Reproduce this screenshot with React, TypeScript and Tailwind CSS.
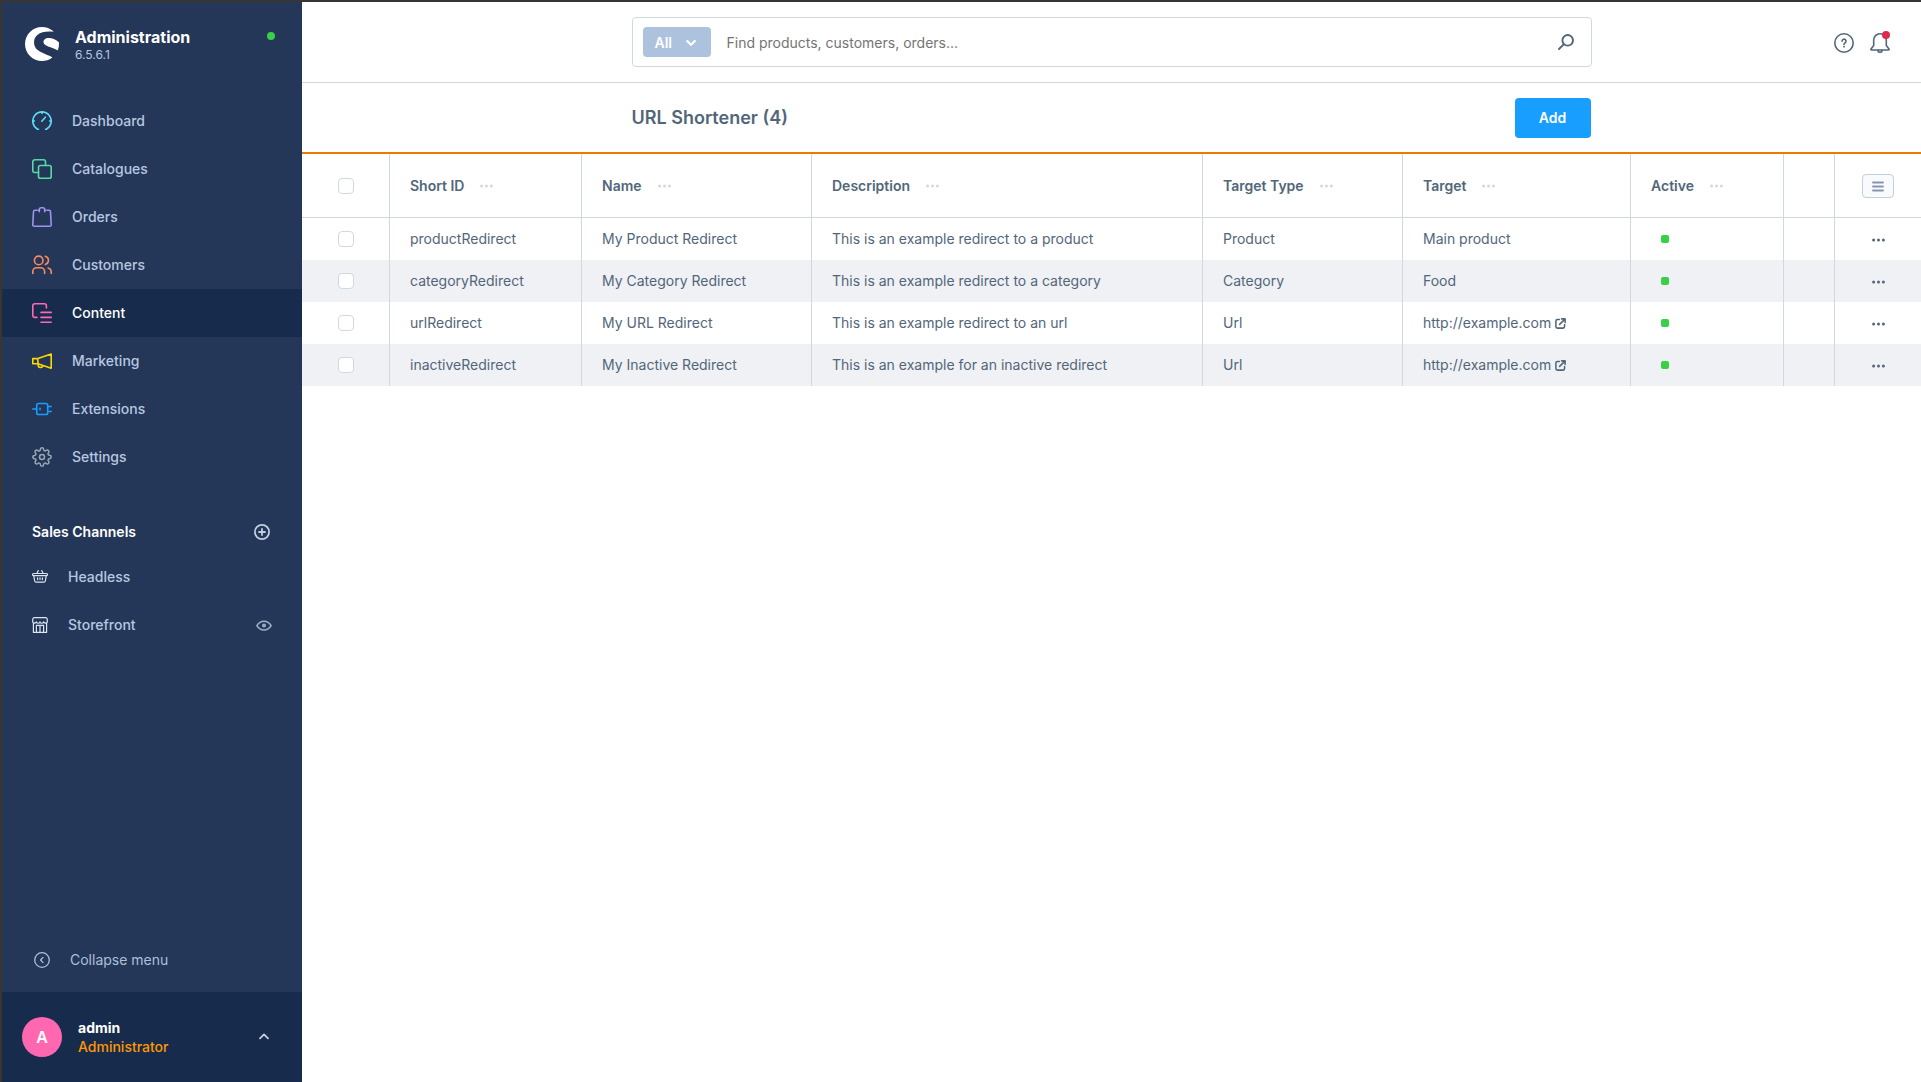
import { useState } from 'react'
import type { ReactNode } from 'react'
import { SiShopware } from 'react-icons/si'
import clsx from 'clsx'

interface IconProps {
  size?: number
  box?: string
  stroke?: number
  className?: string
  children: ReactNode
}

function Icon({ size = 20, box = '0 0 20 20', stroke = 1.6, className, children }: IconProps) {
  return (
    <svg
      width={size}
      height={size}
      viewBox={box}
      fill="none"
      stroke="currentColor"
      strokeWidth={stroke}
      strokeLinecap="round"
      strokeLinejoin="round"
      className={clsx('shrink-0', className)}
      aria-hidden="true"
    >
      {children}
    </svg>
  )
}

function Dots({ className }: { className?: string }) {
  return (
    <svg width="13" height="4" viewBox="0 0 13 4" fill="currentColor" className={className} aria-hidden="true">
      <circle cx="1.6" cy="2" r="1.5" />
      <circle cx="6.5" cy="2" r="1.5" />
      <circle cx="11.4" cy="2" r="1.5" />
    </svg>
  )
}

const NAV = [
  {
    label: 'Dashboard',
    icon: (
      <Icon className="text-[#5fdcf5]">
        <path d="M6.5 18.2H5.6A9.2 9.2 0 1 1 14.4 18.2H13.5" />
        <path d="M10 .9v1.5M.9 10h1.5M17.6 10h1.5M9.800 10.2l3.600-4" />
      </Icon>
    ),
  },
  {
    label: 'Catalogues',
    icon: (
      <Icon className="text-[#57d9a3]">
        <path d="M6.500 13.500H2.800a2 2 0 0 1-2-2V2.800a2 2 0 0 1 2-2h8.700a2 2 0 0 1 2 2v3.600" />
        <rect x="6.500" y="6.500" width="12.700" height="12.700" rx="1.800" />
      </Icon>
    ),
  },
  {
    label: 'Orders',
    icon: (
      <Icon className="text-[#a092f0]">
        <path d="M4.800 3.200H2.900a1.400 1.400 0 0 0-1.400 1.300L.8 17.700a1.400 1.400 0 0 0 1.400 1.500h15.600a1.400 1.400 0 0 0 1.400-1.500l-.7-13.200a1.400 1.400 0 0 0-1.400-1.300h-1.900" />
        <path d="M7.300 4.800V2.700a1.900 1.900 0 0 1 1.900-1.900h1.600a1.900 1.900 0 0 1 1.900 1.900v2.100M6 3.200h1.300M12.700 3.200H14" />
      </Icon>
    ),
  },
  {
    label: 'Customers',
    icon: (
      <Icon className="text-[#f88962]">
        <circle cx="6.700" cy="5.400" r="4.300" />
        <path d="M.8 18.500v-2a3.800 3.800 0 0 1 3.800-3.800h4.200a3.800 3.800 0 0 1 3.800 3.800v2" />
        <path d="M13.300 1.200a4.300 4.300 0 0 1 0 8.300M16.200 12.900a4 4 0 0 1 3 3.800v1.800" />
      </Icon>
    ),
  },
  {
    label: 'Content',
    icon: (
      <Icon className="text-[#ff68b4]">
        <path d="M4.900 14.400H2.700a1.900 1.900 0 0 1-1.900-1.900V2.700A1.900 1.900 0 0 1 2.700.8h9.800a1.900 1.900 0 0 1 1.900 1.900v2.200" />
        <path d="M9 9.400h10.200M9 14.400h10.200M9 19.200h10.200" />
      </Icon>
    ),
  },
  {
    label: 'Marketing',
    icon: (
      <Icon className="text-[#ffd700]">
        <path d="M.8 7.600h5.100v5.200H.8zM5.900 7.600 19.200 3v14.200L5.900 12.800" />
        <path d="M6.200 12.900v1.300a2.400 2.400 0 0 0 4.700.6" />
      </Icon>
    ),
  },
  {
    label: 'Extensions',
    icon: (
      <Icon className="text-[#189eff]">
        <rect x="4.700" y="4.500" width="11" height="11" rx="1.800" />
        <path d="M.8 10h3.900M15.700 7.500h3.500M15.700 12.500h3.500M8 9.200v1.600" />
      </Icon>
    ),
  },
  {
    label: 'Settings',
    icon: (
      <Icon box="0 0 24 24" stroke={1.8} className="text-[#9aa8b5]">
        <circle cx="12" cy="12" r="3" />
        <path d="M19.4 15a1.65 1.65 0 0 0 .33 1.82l.06.06a2 2 0 0 1 0 2.83 2 2 0 0 1-2.83 0l-.06-.06a1.65 1.65 0 0 0-1.82-.33 1.65 1.65 0 0 0-1 1.51V21a2 2 0 0 1-2 2 2 2 0 0 1-2-2v-.09A1.65 1.65 0 0 0 9 19.4a1.65 1.65 0 0 0-1.82.33l-.06.06a2 2 0 0 1-2.83 0 2 2 0 0 1 0-2.83l.06-.06a1.65 1.65 0 0 0 .33-1.82 1.65 1.65 0 0 0-1.51-1H3a2 2 0 0 1-2-2 2 2 0 0 1 2-2h.09A1.65 1.65 0 0 0 4.6 9a1.65 1.65 0 0 0-.33-1.82l-.06-.06a2 2 0 0 1 0-2.83 2 2 0 0 1 2.83 0l.06.06a1.65 1.65 0 0 0 1.82.33H9a1.65 1.65 0 0 0 1-1.51V3a2 2 0 0 1 2-2 2 2 0 0 1 2 2v.09a1.65 1.65 0 0 0 1 1.51 1.65 1.65 0 0 0 1.82-.33l.06-.06a2 2 0 0 1 2.83 0 2 2 0 0 1 0 2.83l-.06.06a1.65 1.65 0 0 0-.33 1.82V9a1.65 1.65 0 0 0 1.51 1H21a2 2 0 0 1 2 2 2 2 0 0 1-2 2h-.09a1.65 1.65 0 0 0-1.51 1z" />
      </Icon>
    ),
  },
]

const COLUMNS = ['Short ID', 'Name', 'Description', 'Target Type', 'Target', 'Active']

interface Redirect {
  shortId: string
  name: string
  description: string
  type: string
  target: string
}

const REDIRECTS: Redirect[] = [
  {
    shortId: 'productRedirect',
    name: 'My Product Redirect',
    description: 'This is an example redirect to a product',
    type: 'Product',
    target: 'Main product',
  },
  {
    shortId: 'categoryRedirect',
    name: 'My Category Redirect',
    description: 'This is an example redirect to a category',
    type: 'Category',
    target: 'Food',
  },
  {
    shortId: 'urlRedirect',
    name: 'My URL Redirect',
    description: 'This is an example redirect to an url',
    type: 'Url',
    target: 'http://example.com',
  },
  {
    shortId: 'inactiveRedirect',
    name: 'My Inactive Redirect',
    description: 'This is an example for an inactive redirect',
    type: 'Url',
    target: 'http://example.com',
  },
]

function Sidebar() {
  return (
    <aside className="flex w-[300px] shrink-0 flex-col bg-[#243758] text-sm text-[#b8c7e0]">
      <div className="flex h-[95px] items-start px-[23px] pt-[25px]">
        <SiShopware size={34} className="shrink-0 text-white" aria-hidden="true" />
        <div className="ml-4 flex-1">
          <p className="text-base leading-5 font-bold text-white">Administration</p>
          <p className="text-xs leading-4">6.5.6.1</p>
        </div>
        <span className="mt-[5px] mr-1 size-2 rounded-full bg-[#37d046]" />
      </div>

      <nav aria-label="Main">
        {NAV.map((item) => (
          <a
            key={item.label}
            href="#"
            className={clsx(
              'flex h-12 items-center gap-5 px-[30px] font-medium',
              item.label === 'Content' && 'bg-[#172b4d] text-white'
            )}
          >
            {item.icon}
            {item.label}
          </a>
        ))}
      </nav>

      <div className="mt-[30px] flex h-[42px] items-center justify-between pr-8 pl-[30px]">
        <h2 className="font-semibold text-white">Sales Channels</h2>
        <button type="button" aria-label="Add sales channel" className="text-[#c2cfe0]">
          <Icon size={16} box="0 0 16 16" stroke={1.8}>
            <circle cx="8" cy="8" r="7.1" />
            <path d="M8 5v6M5 8h6" />
          </Icon>
        </button>
      </div>
      <nav aria-label="Sales channels">
        <a href="#" className="flex h-12 items-center gap-5 px-[30px] font-medium">
          <Icon size={16} box="0 0 16 16" stroke={1.2} className="text-[#dde5f0]">
            <path d="M1.600 4.500h12.800a1 1 0 0 1 0 2.200H1.600a1 1 0 0 1 0-2.200zM1.700 6.800l1 5.200a1.500 1.500 0 0 0 1.500 1.200h7.600a1.500 1.500 0 0 0 1.500-1.200l1-5.200" />
            <path d="M5 4.300 6.300 1.600M11 4.300 9.700 1.600M5.600 8.800v1.800M8 8.800v1.800M10.400 8.800v1.800" />
          </Icon>
          Headless
        </a>
        <div className="flex h-12 items-center justify-between px-[30px]">
          <a href="#" className="flex items-center gap-5 font-medium">
            <Icon size={16} box="0 0 16 16" stroke={1.2} className="text-[#dde5f0]">
              <path d="M1.400 6v9.400h13.200V6M2.200.6h11.600a1.400 1.400 0 0 1 1.300 1l.3 2.600a1.900 1.900 0 0 1-3.700.6 1.900 1.900 0 0 1-3.700 0 1.900 1.900 0 0 1-3.700 0A1.900 1.900 0 0 1 .6 4.200l.3-2.600a1.400 1.400 0 0 1 1.300-1z" />
              <path d="M4.400 15.400V8.400h7.200v7M8 8.400v7" />
            </Icon>
            Storefront
          </a>
          <button type="button" aria-label="Open storefront" className="text-[#9fb0c6]">
            <Icon size={16} box="0 0 16 16" stroke={1.6}>
              <path d="M.9 8.600C2.600 5.700 5 4.200 8 4.200s5.400 1.500 7.100 4.400c-1.700 2.900-4.100 4.400-7.100 4.400S2.600 11.500.9 8.600z" />
              <circle cx="8" cy="8.600" r="1.200" />
            </Icon>
          </button>
        </div>
      </nav>

      <button type="button" className="mt-auto mb-[7px] flex h-[50px] items-center gap-5 px-8 text-[#b0bfd8]">
        <Icon size={16} box="0 0 16 16" stroke={1.3}>
          <circle cx="8" cy="8" r="7.300" />
          <path d="M9 5.400 6.600 8 9 10.600" />
        </Icon>
        Collapse menu
      </button>

      <button type="button" className="flex h-[90px] items-center bg-[#172b4d] pr-[30px] pl-5 text-left">
        <span className="flex size-10 items-center justify-center rounded-full bg-[#ff68b0] text-base font-semibold text-white">
          A
        </span>
        <span className="ml-4 flex-1 leading-[19px]">
          <span className="block font-bold text-white">admin</span>
          <span className="block font-medium text-[#ff9800]">Administrator</span>
        </span>
        <Icon size={16} box="0 0 16 16" stroke={1.800} className="text-[#c2cfe0]">
          <path d="M4 9.400 8 5.400l4 4" />
        </Icon>
      </button>
    </aside>
  )
}

function TopBar() {
  return (
    <header className="grid h-[81px] grid-cols-[1fr_960px_1fr] items-center border-b border-[#d1d9e0]">
      <form
        role="search"
        className="col-start-2 flex h-[50px] items-center rounded border border-[#d1d9e0] pr-[17px] pl-2.5"
      >
        <button
          type="button"
          aria-haspopup="menu"
          className="flex h-[30px] w-[68px] items-center justify-between rounded bg-[#adc3dd] pt-px pr-[15px] pl-3 text-sm font-semibold text-white"
        >
          All
          <Icon size={10} box="0 0 10 10" stroke={2.2}>
            <path d="M1.200 3 5 6.800 8.800 3" />
          </Icon>
        </button>
        <input
          type="search"
          aria-label="Search"
          placeholder="Find products, customers, orders..."
          className="ml-4 flex-1 pt-0.5 text-sm text-[#52667a] outline-none placeholder:text-[#757575]"
        />
        <button type="submit" aria-label="Start search">
          <Icon size={16} box="0 0 16 16" stroke={1.900}>
            <circle cx="9.700" cy="6.300" r="5.300" />
            <path d="M5.700 10.300 1 15" />
          </Icon>
        </button>
      </form>

      <div className="mr-[31px] flex items-center gap-4 justify-self-end pt-0.5">
        <button type="button" aria-label="Help">
          <Icon>
            <circle cx="10" cy="10" r="9.200" />
            <path d="M8 8.200a2 2 0 1 1 3 1.700c-.6.400-1 .7-1 1.500" />
            <path d="M10 13.600v.1" strokeWidth="1.800" />
          </Icon>
        </button>
        <button type="button" aria-label="Notifications" className="relative">
          <Icon>
            <path d="M3.700 12.500V7.200A6.300 6.300 0 0 1 10 .8h.600a6.300 6.300 0 0 1 5.700 6.400v5.300l2.700 3.400a.7.700 0 0 1-.6 1.100H1.600a.7.700 0 0 1-.6-1.100z" />
            <path d="M7.900 17.200a2.100 2.100 0 0 0 4.200 0" />
          </Icon>
          <span className="absolute -top-0.5 right-0 size-2 rounded-full bg-[#de294c]" />
        </button>
      </div>
    </header>
  )
}

function Checkbox({ label, checked, onChange }: { label: string; checked: boolean; onChange: () => void }) {
  return (
    <input
      type="checkbox"
      aria-label={label}
      checked={checked}
      onChange={onChange}
      className="mx-auto block size-4 appearance-none rounded border border-[#d1d9e0] bg-white checked:bg-[#189eff]"
    />
  )
}

function RedirectTable() {
  const [selected, setSelected] = useState<string[]>([])
  const allSelected = selected.length === REDIRECTS.length

  function toggle(id: string) {
    setSelected((prev) => (prev.includes(id) ? prev.filter((s) => s !== id) : [...prev, id]))
  }

  return (
    <table className="w-full table-fixed border-separate border-spacing-0 text-left text-sm">
      <colgroup>
        <col className="w-[88px]" />
        <col className="w-[192px]" />
        <col className="w-[230px]" />
        <col />
        <col className="w-[200px]" />
        <col className="w-[228px]" />
        <col className="w-[153px]" />
        <col className="w-[51px]" />
        <col className="w-[86px]" />
      </colgroup>
      <thead>
        <tr className="h-16 [&>th]:border-b [&>th]:border-[#d1d9e0] [&>th:not(:last-child)]:border-r">
          <th>
            <Checkbox
              label="Select all"
              checked={allSelected}
              onChange={() => setSelected(allSelected ? [] : REDIRECTS.map((r) => r.shortId))}
            />
          </th>
          {COLUMNS.map((column) => (
            <th key={column} className="px-5 font-semibold">
              <div className="flex items-center gap-4">
                {column}
                <button type="button" aria-label={`${column} options`} className="text-[#d1d9e0]">
                  <Dots />
                </button>
              </div>
            </th>
          ))}
          <th />
          <th>
            <button
              type="button"
              aria-label="Table settings"
              className="mx-auto flex h-6 w-8 items-center justify-center rounded border border-[#c2cfdc] bg-[#f9fafb] text-[#8395b3]"
            >
              <Icon size={12} box="0 0 12 12" stroke={1.800}>
                <path d="M1 2.500h10M1 6.500h10M1 10.500h10" />
              </Icon>
            </button>
          </th>
        </tr>
      </thead>
      <tbody>
        {REDIRECTS.map((row) => (
          <tr
            key={row.shortId}
            className="h-[42px] even:bg-[#f0f1f5] [&>td]:border-[#d1d9e0] [&>td:not(:last-child)]:border-r"
          >
            <td>
              <Checkbox
                label={`Select ${row.shortId}`}
                checked={selected.includes(row.shortId)}
                onChange={() => toggle(row.shortId)}
              />
            </td>
            <td className="px-5">{row.shortId}</td>
            <td className="px-5">{row.name}</td>
            <td className="px-5">{row.description}</td>
            <td className="px-5">{row.type}</td>
            <td className="px-5">
              {row.type === 'Url' ? (
                <a href={row.target} className="flex items-center gap-1">
                  {row.target}
                  <Icon size={11} box="0 0 10 10" stroke={1.400}>
                    <path d="M4 1.300H2.200a1.400 1.400 0 0 0-1.400 1.400v5.100a1.400 1.400 0 0 0 1.400 1.400h5.100a1.400 1.400 0 0 0 1.400-1.400V6" />
                    <path d="M6 .8h3.200V4M9 1 4.200 5.800" />
                  </Icon>
                </a>
              ) : (
                row.target
              )}
            </td>
            <td className="px-[30px]">
              <span className="block size-2 rounded-xs bg-[#37d046]" />
            </td>
            <td />
            <td>
              <button type="button" aria-label={`Actions for ${row.shortId}`} className="mx-auto block pt-0.5">
                <Dots />
              </button>
            </td>
          </tr>
        ))}
      </tbody>
    </table>
  )
}

export default function App() {
  return (
    <div className="flex min-h-screen border-t-2 border-l-2 border-[#383535] bg-white font-['Inter',sans-serif] text-[#52667a] antialiased">
      <Sidebar />
      <main className="min-w-0 flex-1">
        <TopBar />
        <div className="grid h-[71px] grid-cols-[1fr_960px_1fr] items-center border-b-2 border-[#eb7a00]">
          <div className="col-start-2 flex items-center justify-between">
            <h1 className="text-lg font-semibold">URL Shortener (4)</h1>
            <button
              type="button"
              className="mr-px h-10 w-[76px] rounded bg-[#189eff] text-sm font-semibold text-white"
            >
              Add
            </button>
          </div>
        </div>
        <RedirectTable />
      </main>
    </div>
  )
}
